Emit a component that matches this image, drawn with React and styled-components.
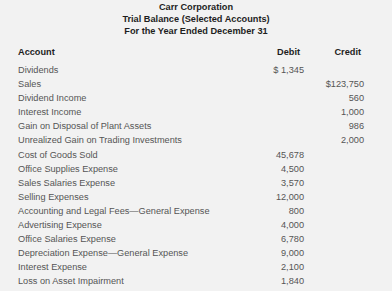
import React from "react";
import styled, { createGlobalStyle } from "styled-components";

const Global = createGlobalStyle`
  html, body { margin: 0; padding: 0; background: #f2f2f2; }
  body { font-family: "Liberation Sans", Arial, sans-serif; }
`;

const Page = styled.div`
  width: 392px;
  height: 291px;
  background: #f2f2f2;
  box-sizing: border-box;
  padding: 0.5px 28px 0 18px;
  overflow: hidden;
`;

const Title = styled.div`
  text-align: center;
  font-weight: bold;
  font-size: 9.2px;
  line-height: 12.2px;
  color: #1e1e1e;
  margin: 0 -28px 0 -18px;
`;

const Grid = styled.div`
  display: grid;
  grid-template-columns: 1fr 60px 60px;
  grid-auto-rows: 14.07px;
  font-size: 9.2px;
  line-height: 14.07px;
  margin-top: ${(p) => p.$gap}px;
`;

const HeadCell = styled.div`
  font-weight: bold;
  color: #1e1e1e;
  text-align: ${(p) => (p.$right ? "right" : "left")};
  padding-right: ${(p) => p.$pad || 0}px;
`;

const Cell = styled.div`
  color: #555;
  white-space: nowrap;
  text-align: ${(p) => (p.$right ? "right" : "left")};
`;

const rows = [
  ["Dividends", "$ 1,345", ""],
  ["Sales", "", "$123,750"],
  ["Dividend Income", "", "560"],
  ["Interest Income", "", "1,000"],
  ["Gain on Disposal of Plant Assets", "", "986"],
  ["Unrealized Gain on Trading Investments", "", "2,000"],
  ["Cost of Goods Sold", "45,678", ""],
  ["Office Supplies Expense", "4,500", ""],
  ["Sales Salaries Expense", "3,570", ""],
  ["Selling Expenses", "12,000", ""],
  ["Accounting and Legal Fees\u2014General Expense", "800", ""],
  ["Advertising Expense", "4,000", ""],
  ["Office Salaries Expense", "6,780", ""],
  ["Depreciation Expense\u2014General Expense", "9,000", ""],
  ["Interest Expense", "2,100", ""],
  ["Loss on Asset Impairment", "1,840", ""],
];

export default function App() {
  return (
    <Page>
      <Global />
      <Title>
        <div>Carr Corporation</div>
        <div>Trial Balance (Selected Accounts)</div>
        <div>For the Year Ended December 31</div>
      </Title>
      <Grid $gap={8}>
        <HeadCell>Account</HeadCell>
        <HeadCell $right $pad={4}>Debit</HeadCell>
        <HeadCell $right $pad={3}>Credit</HeadCell>
      </Grid>
      <Grid $gap={4}>
        {rows.map(([a, d, c]) => (
          <React.Fragment key={a}>
            <Cell>{a}</Cell>
            <Cell $right>{d}</Cell>
            <Cell $right>{c}</Cell>
          </React.Fragment>
        ))}
      </Grid>
    </Page>
  );
}
